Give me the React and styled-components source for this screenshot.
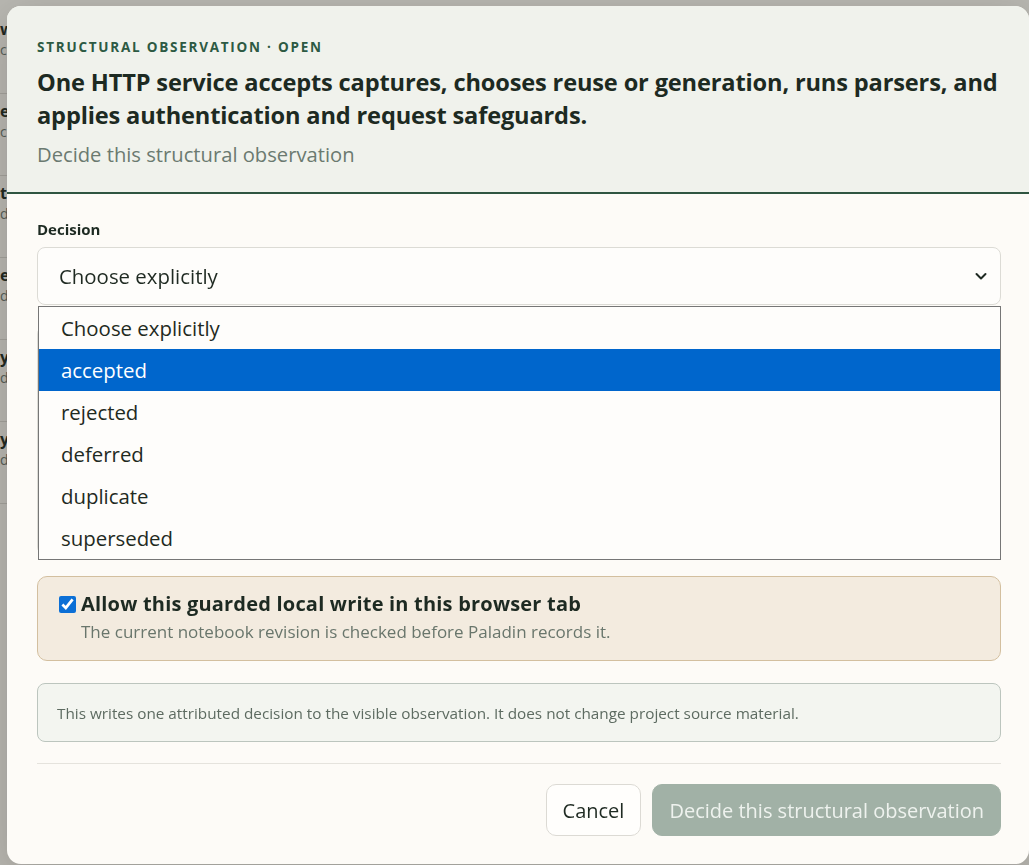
import React, { useState } from "react";
import styled, { createGlobalStyle } from "styled-components";

const GlobalStyle = createGlobalStyle`
  html, body {
    margin: 0;
    padding: 0;
    background: #f7f5ef;
    font-family: "Open Sans", "Noto Sans", sans-serif;
    overflow: hidden;
  }
  * { box-sizing: border-box; }
`;

const Page = styled.div`
  width: 1029px;
  height: 865px;
  padding: 12px 0 0 0;
`;

const BackRow = styled.div`
  height: 82px;
  padding-top: 6px;
  border-bottom: 1px solid #d9d6cf;
  color: #1e2a22;
`;

const BackTitle = styled.div`
  font-size: 16px;
  font-weight: 700;
  line-height: 22px;
`;

const BackMeta = styled.div`
  font-size: 14px;
  color: #6d756f;
  line-height: 20px;
`;

const Backdrop = styled.div`
  position: fixed;
  inset: 0;
  background: rgba(40, 40, 34, 0.3);
`;

const Dialog = styled.div`
  position: fixed;
  left: 7px;
  top: 6px;
  width: 1022px;
  background: #fdfbf7;
  border-radius: 14px;
  overflow: hidden;
  box-shadow: 0 10px 40px rgba(0, 0, 0, 0.18);
`;

const Header = styled.header`
  background: #f0f2ec;
  border-bottom: 2px solid #2f5541;
  padding: 32px 28px 24px 30px;
`;

const Eyebrow = styled.div`
  font-size: 13.5px;
  line-height: 18px;
  font-weight: 700;
  letter-spacing: 0.13em;
  text-transform: uppercase;
  color: #2d5a43;
`;

const Title = styled.h2`
  margin: 10px 0 0;
  font-size: 23.6px;
  line-height: 33px;
  font-weight: 700;
  letter-spacing: -0.15px;
  color: #1d2a22;
`;

const Subtitle = styled.p`
  margin: 8px 0 0;
  font-size: 20.2px;
  line-height: 28px;
  color: #6b7a70;
`;

const Body = styled.div`
  display: flex;
  flex-direction: column;
  gap: 21px;
  padding: 25px 28px 28px 30px;
`;

const Field = styled.div`
  position: relative;
  display: flex;
  flex-direction: column;
  gap: 8px;
`;

const Label = styled.label`
  font-size: 15px;
  line-height: 20px;
  font-weight: 700;
  color: #1d2a22;
`;

const SelectBox = styled.div`
  height: 58px;
  display: flex;
  align-items: center;
  justify-content: space-between;
  padding: 0 12px 0 21px;
  border: 1px solid #dcdbd5;
  border-radius: 8px;
  background: #fefdfb;
  font-size: 20.4px;
  color: #1f2a22;
`;

const ListBox = styled.ul`
  position: absolute;
  top: calc(100% + 1px);
  left: 1px;
  right: 0;
  margin: 0;
  padding: 0;
  list-style: none;
  border: 1px solid #767676;
  background: #fefdfb;
  z-index: 2;
`;

const Option = styled.li`
  height: 42px;
  display: flex;
  align-items: center;
  padding-left: 22px;
  font-size: 20.4px;
  color: ${(p) => (p.$active ? "#ffffff" : "#1f2a22")};
  background: ${(p) => (p.$active ? "#0066cc" : "transparent")};
`;

const TextArea = styled.textarea`
  height: 229px;
  border: 1px solid #dcdbd5;
  border-radius: 8px;
  background: #fefdfb;
  resize: none;
`;

const GuardPanel = styled.div`
  padding: 14px 20px 16px 21px;
  border: 1px solid #d3bf9f;
  border-radius: 10px;
  background: #f3ebdf;
`;

const CheckRow = styled.label`
  display: flex;
  align-items: center;
  gap: 5px;
  font-size: 20px;
  line-height: 26px;
  font-weight: 700;
  letter-spacing: 0.2px;
  color: #1d2a22;
`;

const Check = styled.input`
  width: 17px;
  height: 17px;
  margin: 0;
  accent-color: #0b6fd6;
`;

const GuardHint = styled.div`
  margin: 3px 0 0 22px;
  font-size: 17px;
  line-height: 24px;
  color: #69766c;
`;

const Note = styled.div`
  height: 59px;
  margin-top: 1px;
  display: flex;
  align-items: center;
  padding: 0 19px;
  border: 1px solid #bcc5be;
  border-radius: 8px;
  background: #f3f5f0;
  font-size: 15.3px;
  color: #5d6b61;
`;

const Divider = styled.hr`
  margin: 0;
  border: 0;
  border-top: 1px solid #e5e3dd;
`;

const Actions = styled.div`
  display: flex;
  justify-content: flex-end;
  gap: 11px;
  margin-top: -1px;
`;

const Button = styled.button`
  height: 52px;
  padding: 0 16px;
  border-radius: 10px;
  font-family: inherit;
  font-size: 20px;
  border: 1px solid ${(p) => (p.$primary ? "#a1b1a6" : "#dcdad4")};
  background: ${(p) => (p.$primary ? "#a1b1a6" : "#fffefc")};
  color: ${(p) => (p.$primary ? "#eef2ee" : "#1f2a22")};
`;

const options = [
  "Choose explicitly",
  "accepted",
  "rejected",
  "deferred",
  "duplicate",
  "superseded",
];

const backRows = [
  ["which service owns capture", "current"],
  ["evidence from parsers", "current"],
  ["the generate route", "document · api/routers/generate.py · current"],
  ["e_parse handler", "document · current"],
  ["y Header check", "document · current"],
  ["y-header guard", "document · current"],
];

function Chevron() {
  return (
    <svg width="14" height="14" viewBox="0 0 14 14" aria-hidden="true">
      <polyline
        points="2.5,5 7,9.5 11.5,5"
        fill="none"
        stroke="#1f2a22"
        strokeWidth="2"
        strokeLinecap="round"
        strokeLinejoin="round"
      />
    </svg>
  );
}

export default function App() {
  const [allowed, setAllowed] = useState(true);
  const active = 1;

  return (
    <Page>
      <GlobalStyle />
      {backRows.map(([title, meta]) => (
        <BackRow key={title}>
          <BackTitle>{title}</BackTitle>
          <BackMeta>{meta}</BackMeta>
        </BackRow>
      ))}
      <Backdrop />
      <Dialog role="dialog">
        <Header>
          <Eyebrow>Structural observation · open</Eyebrow>
          <Title>
            One HTTP service accepts captures, chooses reuse or generation,
            runs parsers, and applies authentication and request safeguards.
          </Title>
          <Subtitle>Decide this structural observation</Subtitle>
        </Header>
        <Body>
          <Field>
            <Label>Decision</Label>
            <SelectBox>
              Choose explicitly
              <Chevron />
            </SelectBox>
            <ListBox>
              {options.map((o, i) => (
                <Option key={o} $active={i === active}>
                  {o}
                </Option>
              ))}
            </ListBox>
          </Field>
          <TextArea aria-label="Rationale" />
          <GuardPanel>
            <CheckRow>
              <Check
                type="checkbox"
                checked={allowed}
                onChange={(e) => setAllowed(e.target.checked)}
              />
              Allow this guarded local write in this browser tab
            </CheckRow>
            <GuardHint>
              The current notebook revision is checked before Paladin records
              it.
            </GuardHint>
          </GuardPanel>
          <Note>
            This writes one attributed decision to the visible observation. It
            does not change project source material.
          </Note>
          <Divider />
          <Actions>
            <Button>Cancel</Button>
            <Button $primary>Decide this structural observation</Button>
          </Actions>
        </Body>
      </Dialog>
    </Page>
  );
}
